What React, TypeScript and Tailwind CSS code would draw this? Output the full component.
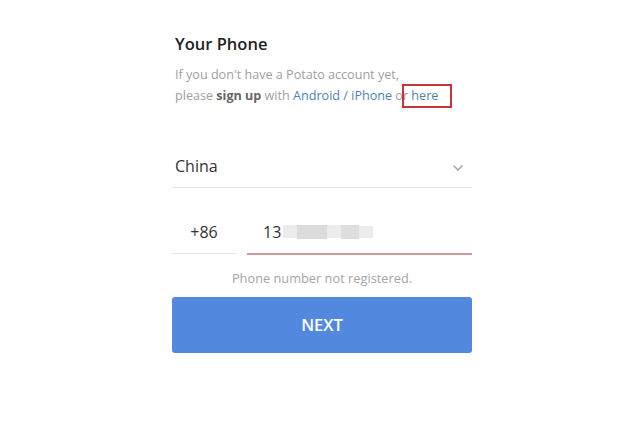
export default function App() {
  return (
    <div
      className="w-[635px] h-[425px] bg-white"
      style={{ fontFamily: '"Open Sans", "Liberation Sans", sans-serif' }}
    >
      <div className="ml-[172px] w-[300px] pt-[33px]">
        {/* ── Header ─────────────────────────── */}
        <div className="pl-[3px]">
          <h1 className="text-[16.5px] leading-[22px] font-semibold text-[#222]">Your Phone</h1>
          <p className="mt-[9px] text-[12.6px] leading-[21px] text-[#a0a0a0]">
            If you don't have a Potato account yet,
            <br />
            please <span className="font-bold text-[#666]">sign up</span> with{" "}
            <span className="text-[#4d7fb3]">Android / iPhone</span>{" "}
            <span className="relative">
              or <span className="text-[#4d7fb3]">here</span>
              <span className="absolute left-[7px] -right-[14px] -top-[3px] -bottom-[4px] border-[2.5px] border-[#c9363a]" />
            </span>
          </p>
        </div>

        {/* ── Country select ─────────────────── */}
        <div className="mt-[41px] h-[41px] flex items-center justify-between border-b border-[#e6e6e6] pl-[3px] pr-[8px]">
          <span className="text-[16px] text-[#333] -mt-[3px]">China</span>
          <svg width="12" height="8" viewBox="0 0 12 8" className="mt-[2px]">
            <path d="M1.5 1.5 L6 6 L10.5 1.5" fill="none" stroke="#a8a8a8" strokeWidth="1.6" />
          </svg>
        </div>

        {/* ── Phone inputs ───────────────────── */}
        <div className="mt-[25px] flex gap-[11px]">
          <div className="w-[64px] h-[41px] border-b border-[#e6e6e6] flex items-center justify-center">
            <span className="text-[16px] text-[#333] -mt-[2px]">+86</span>
          </div>
          <div className="flex-1 h-[42px] border-b-2 border-[#cf9b9b] flex items-center pl-[16px]">
            <span className="text-[16px] text-[#333] -mt-[3px]">13</span>
            <div className="flex items-center -mt-[3px] ml-[2px]">
              <div className="w-[14px] h-[13px] bg-[#ececec]" />
              <div className="w-[30px] h-[14px] bg-[#dcdcdc]" />
              <div className="w-[14px] h-[13px] bg-[#ececec]" />
              <div className="w-[18px] h-[14px] bg-[#dedede]" />
              <div className="w-[14px] h-[12px] bg-[#ececec]" />
            </div>
          </div>
        </div>

        <p className="mt-[13px] text-center text-[12.8px] leading-[20px] text-[#a5a5a5]">
          Phone number not registered.
        </p>

        {/* ── Next button ────────────────────── */}
        <button className="mt-[9px] w-full h-[56px] rounded-[3px] bg-[#5289df] text-white text-[16.5px] font-semibold">
          NEXT
        </button>
      </div>
    </div>
  );
}
